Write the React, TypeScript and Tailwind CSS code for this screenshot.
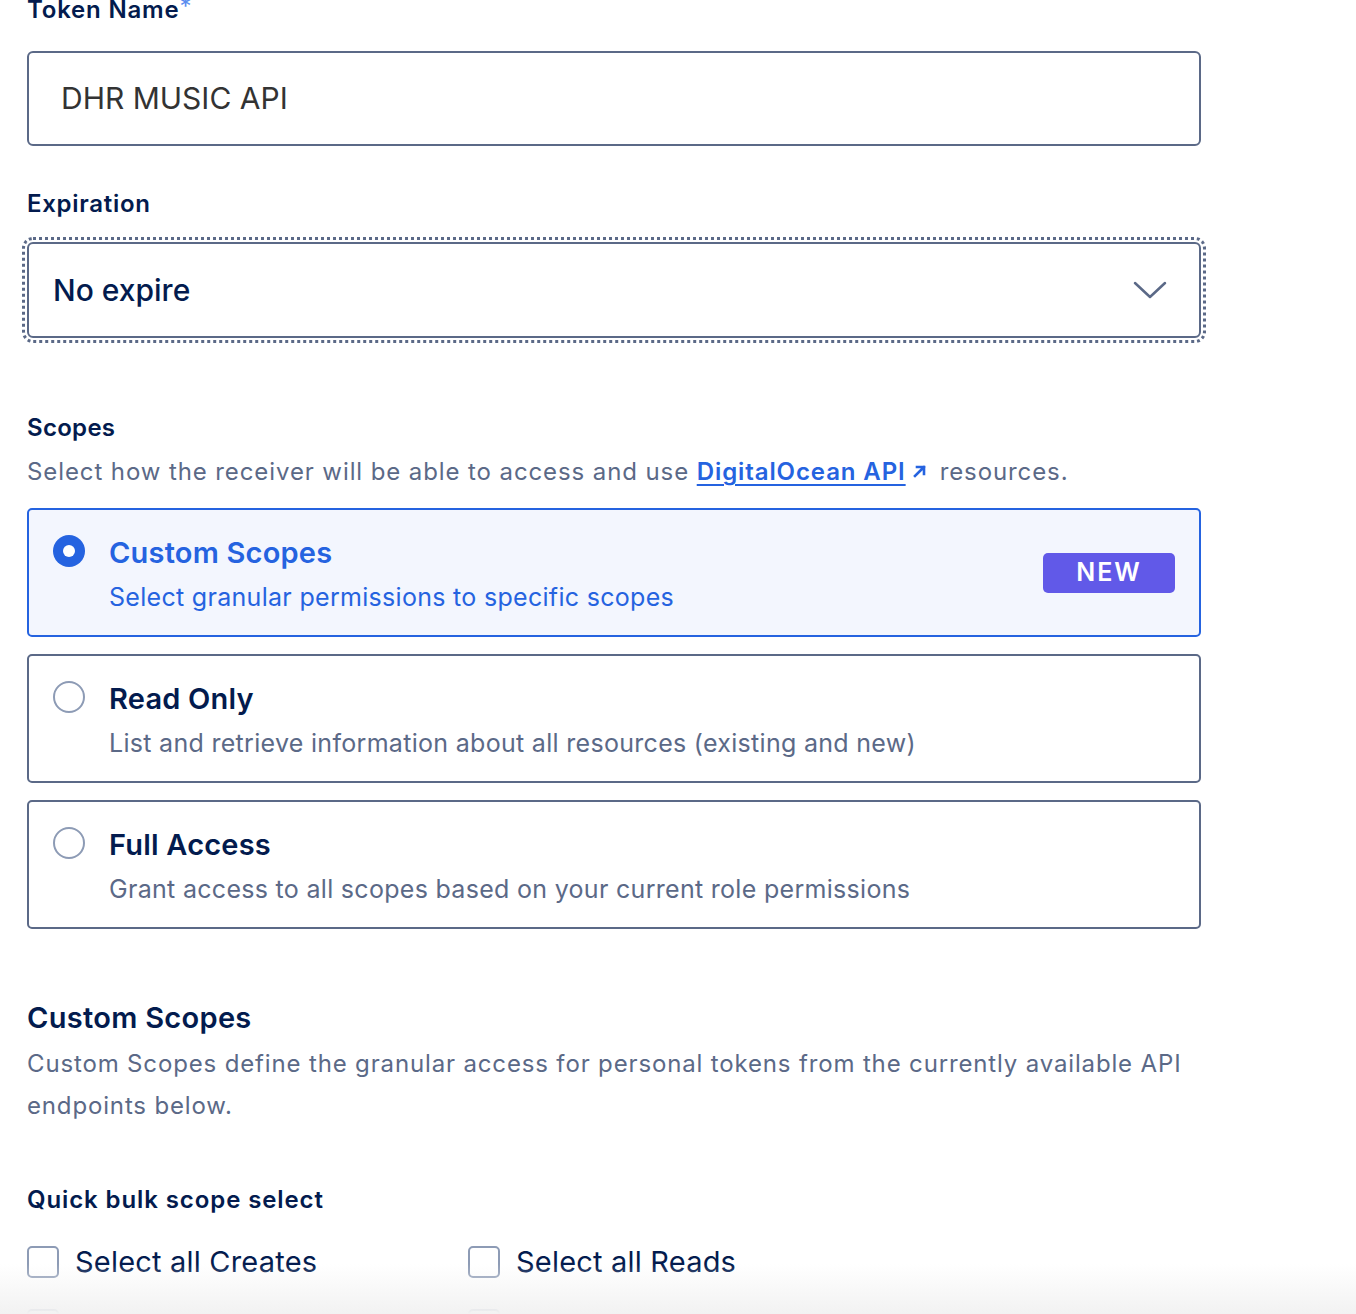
import React, { useState } from "react";

const font = { fontFamily: '"Inter", "Liberation Sans", sans-serif' };

type ScopeOption = {
  id: string;
  title: string;
  desc: string;
  badge?: string;
};

const scopeOptions: ScopeOption[] = [
  { id: "custom", title: "Custom Scopes", desc: "Select granular permissions to specific scopes", badge: "NEW" },
  { id: "read", title: "Read Only", desc: "List and retrieve information about all resources (existing and new)" },
  { id: "full", title: "Full Access", desc: "Grant access to all scopes based on your current role permissions" },
];

const bulkOptions = [
  "Select all Creates",
  "Select all Reads",
  "Select all Updates",
  "Select all Deletes",
];

const ScopeCard = ({ option, selected, onSelect }: { option: ScopeOption; selected: boolean; onSelect: () => void }) => (
  <div
    onClick={onSelect}
    className={`flex items-start h-[129px] rounded-[5px] border-2 cursor-pointer pl-[24px] pr-[24px] pt-[25px] ${selected ? "border-[#2563e0] bg-[#f3f6fe]" : "border-[#5b6987] bg-white"}`}
  >
    {selected ? (
      <div className="size-[32px] rounded-full bg-[#2563e0] grid place-content-center shrink-0">
        <div className="size-[12px] rounded-full bg-white" />
      </div>
    ) : (
      <div className="size-[32px] rounded-full border-2 border-[#8d9bb5] bg-white shrink-0" />
    )}
    <div className="ml-[24px] flex-1">
      <div className={`text-[29px] leading-[36px] font-semibold tracking-[0.2px] ${selected ? "text-[#2563e0]" : "text-[#031b4e]"}`}>
        {option.title}
      </div>
      <div className={`mt-[12px] text-[25px] leading-[28px] tracking-[0.3px] ${selected ? "text-[#2563e0]" : "text-[#5b6987]"}`}>
        {option.desc}
      </div>
    </div>
    {option.badge && (
      <div className="mt-[18px] w-[132px] h-[40px] rounded-[5px] bg-[#6159e8] text-white text-[25px] font-semibold tracking-[2px] grid place-content-center">
        {option.badge}
      </div>
    )}
  </div>
);

export default function App() {
  const [scope, setScope] = useState("custom");
  const [checked, setChecked] = useState<string[]>([]);

  const toggle = (name: string) => {
    setChecked(checked.includes(name) ? checked.filter(c => c !== name) : [...checked, name]);
  };

  return (
    <div className="relative w-[1356px] h-[1314px] overflow-hidden bg-white" style={font}>
      <div className="pl-[27px] w-[1201px]">
        <label className="block -mt-[2px] text-[24px] leading-[24px] font-semibold tracking-[0.8px] text-[#031b4e]">
          Token Name<span className="text-[#5b8def] font-normal align-top text-[24px] leading-[18px]">*</span>
        </label>
        <div className="mt-[29px] h-[95px] rounded-[6px] border-2 border-[#5b6987] flex items-center pl-[32px] text-[30px] text-[#333333]">
          DHR MUSIC API
        </div>

        <div className="mt-[42px] text-[24px] leading-[32px] font-semibold tracking-[0.7px] text-[#031b4e]">Expiration</div>
        <div className="mt-[22px] h-[96px] rounded-[6px] border-2 border-[#5b6987] outline-[3px] outline-dotted outline-[#5b6987] outline-offset-[2px] flex items-center justify-between pl-[24px] pr-[32px]">
          <span className="text-[30px] font-medium text-[#031b4e]">No expire</span>
          <svg width="34" height="20" viewBox="0 0 34 20" fill="none">
            <path d="M2 3 L17 17 L32 3" stroke="#5b6987" strokeWidth="2.5" strokeLinecap="round" strokeLinejoin="round" />
          </svg>
        </div>

        <div className="mt-[74px] text-[24px] leading-[32px] font-semibold tracking-[0.3px] text-[#031b4e]">Scopes</div>
        <p className="mt-[12px] text-[24px] leading-[32px] text-[#5b6987] tracking-[0.9px]">
          Select how the receiver will be able to access and use{" "}
          <a className="text-[#2563e0] font-semibold underline underline-offset-[4px] decoration-2">DigitalOcean API</a>
          <svg className="inline-block ml-[6px] mr-[12px] -mt-[4px]" width="16" height="16" viewBox="0 0 16 16" fill="none">
            <path d="M3 13 L12 4 M5 4 H12 V11" stroke="#2563e0" strokeWidth="2.6" strokeLinecap="square" />
          </svg>
          resources.
        </p>

        <div className="mt-[20px] flex flex-col gap-[17px]">
          {scopeOptions.map(o => (
            <ScopeCard key={o.id} option={o} selected={scope === o.id} onSelect={() => setScope(o.id)} />
          ))}
        </div>

        <div className="mt-[71px] text-[29px] leading-[36px] font-semibold tracking-[0.3px] text-[#031b4e]">Custom Scopes</div>
        <p className="mt-[7px] text-[24px] leading-[42px] text-[#5b6987] tracking-[0.85px]">
          Custom Scopes define the granular access for personal tokens from the currently available API endpoints below.
        </p>

        <div className="mt-[57px] text-[24px] leading-[32px] font-semibold tracking-[0.9px] text-[#031b4e]">Quick bulk scope select</div>
        <div className="mt-[30px] grid grid-cols-[441px_1fr] gap-y-[31px]">
          {bulkOptions.map(name => (
            <label key={name} className="flex items-center h-[32px] cursor-pointer" onClick={() => toggle(name)}>
              <span className={`size-[32px] rounded-[5px] border-2 shrink-0 ${checked.includes(name) ? "bg-[#2563e0] border-[#2563e0]" : "border-[#8d9bb5] bg-white"}`} />
              <span className="ml-[16px] text-[29px] tracking-[0.2px] text-[#031b4e]">{name}</span>
            </label>
          ))}
        </div>
      </div>

      <div className="absolute left-0 right-0 bottom-0 h-[50px] bg-gradient-to-b from-white/0 to-[#f2f2f2] pointer-events-none" />
    </div>
  );
}
